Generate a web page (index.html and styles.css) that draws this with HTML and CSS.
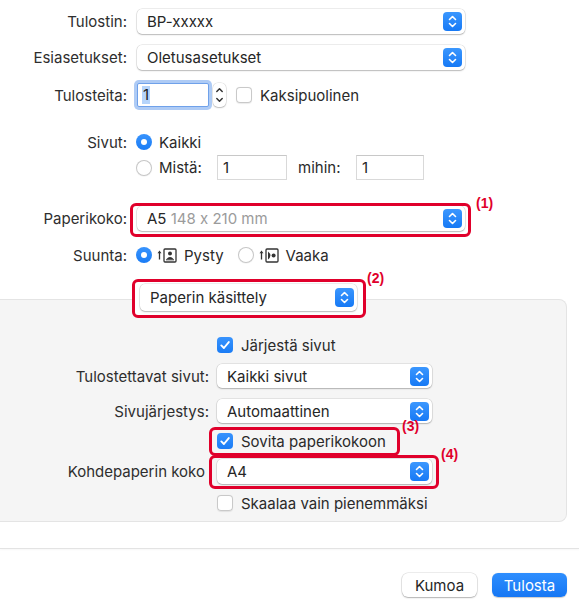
FILE: index.html
```html
<!DOCTYPE html>
<html lang="fi">
<head>
<meta charset="utf-8">
<title>Tulosta</title>
<link rel="stylesheet" href="styles.css">
</head>
<body>
<div class="dialog">
  <section class="top">
    <div class="row r1">
      <span class="lbl">Tulostin:</span>
      <div class="select w-main"><span class="val">BP-xxxxx</span><span class="arrows"><svg viewBox="0 0 19 19" width="19" height="19"><path d="M6.5 7.5L9.5 4.5L12.5 7.5M6.5 11.5L9.5 14.5L12.5 11.5" fill="none" stroke="#fff" stroke-width="1.6" stroke-linecap="round" stroke-linejoin="round"/></svg></span></div>
    </div>
    <div class="row r2">
      <span class="lbl">Esiasetukset:</span>
      <div class="select w-main"><span class="val">Oletusasetukset</span><span class="arrows"><svg viewBox="0 0 19 19" width="19" height="19"><path d="M6.5 7.5L9.5 4.5L12.5 7.5M6.5 11.5L9.5 14.5L12.5 11.5" fill="none" stroke="#fff" stroke-width="1.6" stroke-linecap="round" stroke-linejoin="round"/></svg></span></div>
    </div>
    <div class="row r3">
      <span class="lbl">Tulosteita:</span>
      <div class="num focus"><span class="sel-text">1</span></div>
      <span class="stepper"><svg viewBox="0 0 13 24" width="13" height="24"><path d="M3.8 8.5L6.5 5.8L9.2 8.5M3.8 15.5L6.5 18.2L9.2 15.5" fill="none" stroke="#333" stroke-width="1.5" stroke-linecap="round" stroke-linejoin="round"/></svg></span>
      <span class="check"></span>
      <span class="ctext">Kaksipuolinen</span>
    </div>
    <div class="row r4">
      <span class="lbl lbl-r">Sivut:</span>
      <span class="radio on"></span>
      <span class="rtext">Kaikki</span>
    </div>
    <div class="row r5">
      <span class="lbl lbl-r"></span>
      <span class="radio"></span>
      <span class="rtext from">Mistä:</span>
      <div class="field f1">1</div>
      <span class="to">mihin:</span>
      <div class="field f2">1</div>
    </div>
    <div class="row r6">
      <span class="lbl">Paperikoko:</span>
      <div class="hl hl1">
        <div class="select w-main"><span class="val">A5 <span class="dim">148 x 210 mm</span></span><span class="arrows"><svg viewBox="0 0 19 19" width="19" height="19"><path d="M6.5 7.5L9.5 4.5L12.5 7.5M6.5 11.5L9.5 14.5L12.5 11.5" fill="none" stroke="#fff" stroke-width="1.6" stroke-linecap="round" stroke-linejoin="round"/></svg></span></div>
        <span class="tag tag1">(1)</span>
      </div>
    </div>
    <div class="row r7">
      <span class="lbl lbl-r">Suunta:</span>
      <span class="radio on"></span>
      <svg class="orient" viewBox="0 0 21 15" width="21" height="15"><path d="M2.5 11.5V4" stroke="#333" stroke-width="1.3"/><path d="M0.5 5.2L2.5 2.4L4.5 5.2Z" fill="#333"/><rect x="7" y="1" width="12" height="13" rx="1" fill="#fff" stroke="#333" stroke-width="1.3"/><circle cx="13" cy="5.4" r="2" fill="#333"/><path d="M9.3 11.3Q13 6.8 16.7 11.3Z" fill="#333"/><path d="M9 11.8H17" stroke="#333" stroke-width="1"/></svg>
      <span class="otext">Pysty</span>
      <span class="radio r-vaaka"></span>
      <svg class="orient" viewBox="0 0 21 15" width="21" height="15"><path d="M2.5 11.5V4" stroke="#333" stroke-width="1.3"/><path d="M0.5 5.2L2.5 2.4L4.5 5.2Z" fill="#333"/><rect x="7" y="1" width="12" height="13" rx="1" fill="#fff" stroke="#333" stroke-width="1.3"/><path d="M9 3.5Q13.8 7.5 9 11.5Z" fill="#333"/><circle cx="14.6" cy="7.5" r="2" fill="#333"/></svg>
      <span class="otext">Vaaka</span>
    </div>
    <div class="row r8">
      <div class="hl hl2">
        <div class="select w-pane"><span class="val">Paperin käsittely</span><span class="arrows"><svg viewBox="0 0 19 19" width="19" height="19"><path d="M6.5 7.5L9.5 4.5L12.5 7.5M6.5 11.5L9.5 14.5L12.5 11.5" fill="none" stroke="#fff" stroke-width="1.6" stroke-linecap="round" stroke-linejoin="round"/></svg></span></div>
        <span class="tag tag2">(2)</span>
      </div>
    </div>
  </section>

  <section class="panel">
    <div class="prow p1">
      <span class="check on"><svg viewBox="0 0 16 16" width="16" height="16"><path d="M4.3 8.4L6.9 11L11.8 5.1" fill="none" stroke="#fff" stroke-width="1.9" stroke-linecap="round" stroke-linejoin="round"/></svg></span>
      <span class="ctext">Järjestä sivut</span>
    </div>
    <div class="prow p2">
      <span class="plbl">Tulostettavat sivut:</span>
      <div class="select w-sub"><span class="val">Kaikki sivut</span><span class="arrows"><svg viewBox="0 0 19 19" width="19" height="19"><path d="M6.5 7.5L9.5 4.5L12.5 7.5M6.5 11.5L9.5 14.5L12.5 11.5" fill="none" stroke="#fff" stroke-width="1.6" stroke-linecap="round" stroke-linejoin="round"/></svg></span></div>
    </div>
    <div class="prow p3">
      <span class="plbl">Sivujärjestys:</span>
      <div class="select w-sub"><span class="val">Automaattinen</span><span class="arrows"><svg viewBox="0 0 19 19" width="19" height="19"><path d="M6.5 7.5L9.5 4.5L12.5 7.5M6.5 11.5L9.5 14.5L12.5 11.5" fill="none" stroke="#fff" stroke-width="1.6" stroke-linecap="round" stroke-linejoin="round"/></svg></span></div>
    </div>
    <div class="prow p4">
      <div class="hl hl3">
        <span class="check on"><svg viewBox="0 0 16 16" width="16" height="16"><path d="M4.3 8.4L6.9 11L11.8 5.1" fill="none" stroke="#fff" stroke-width="1.9" stroke-linecap="round" stroke-linejoin="round"/></svg></span>
        <span class="ctext">Sovita paperikokoon</span>
        <span class="tag tag3">(3)</span>
      </div>
    </div>
    <div class="prow p5">
      <span class="plbl plbl-nc">Kohdepaperin koko</span>
      <div class="hl hl4">
        <div class="select w-sub"><span class="val">A4</span><span class="arrows"><svg viewBox="0 0 19 19" width="19" height="19"><path d="M6.5 7.5L9.5 4.5L12.5 7.5M6.5 11.5L9.5 14.5L12.5 11.5" fill="none" stroke="#fff" stroke-width="1.6" stroke-linecap="round" stroke-linejoin="round"/></svg></span></div>
        <span class="tag tag4">(4)</span>
      </div>
    </div>
    <div class="prow p6">
      <span class="check"></span>
      <span class="ctext">Skaalaa vain pienemmäksi</span>
    </div>
  </section>

  <div class="sep"></div>

  <div class="buttons">
    <button class="btn">Kumoa</button>
    <button class="btn primary">Tulosta</button>
  </div>
</div>
</body>
</html>
```

FILE: styles.css
```css
* { box-sizing: border-box; }

html, body {
  margin: 0;
  background: #ffffff;
}

body {
  width: 579px;
  height: 611px;
  overflow: hidden;
  font-family: Inter, "Noto Sans", sans-serif;
  font-size: 15px;
  font-feature-settings: "calt" 0;
  color: #2a2a2a;
}

.top {
  padding-top: 9px;
}

.row {
  display: flex;
  align-items: center;
}

.lbl {
  flex: none;
  width: 127px;
  margin-right: 10px;
  text-align: right;
  color: #2e2e2e;
  white-space: nowrap;
}

.lbl-r { margin-right: 9px; }

.r1 { height: 25px; }
.r2 { height: 25px; margin-top: 11px; }
.r3 { height: 24px; margin-top: 13px; }
.r4 { height: 16px; margin-top: 27px; }
.r5 { height: 25px; margin-top: 5px; }
.r6 { height: 25px; margin-top: 26px; }
.r7 { height: 16px; margin-top: 16px; }
.r8 {
  height: 27px;
  margin-top: 21px;
  padding-left: 140px;
  position: relative;
  z-index: 2;
}

/* popup buttons */
.select {
  display: flex;
  align-items: center;
  height: 25px;
  padding-left: 10px;
  background: #ffffff;
  border-radius: 5px;
  box-shadow: 0 0 0 0.5px rgba(0, 0, 0, 0.14), 0 1px 1.5px rgba(0, 0, 0, 0.22);
  color: #262626;
}

.select .val {
  flex: 1;
  white-space: nowrap;
}

.select .dim { color: #9b9b9b; }

.arrows {
  flex: none;
  display: flex;
  width: 19px;
  height: 19px;
  margin-right: 3px;
  border-radius: 4px;
  background: linear-gradient(#3b97fe, #1679f5);
}

.w-main { width: 328px; }
.w-pane { width: 217px; height: 27px; }
.w-sub { width: 215px; height: 24px; }

/* copies field */
.num {
  width: 72px;
  height: 24px;
  padding-left: 4px;
  display: flex;
  align-items: center;
  background: #fff;
  border: 1px solid #6fa1ea;
  border-radius: 2px;
  box-shadow: 0 0 0 3px rgba(108, 160, 236, 0.55);
}

.sel-text {
  background: #b5d4fb;
  padding: 0 1px;
  line-height: 18px;
  color: #1c1c1c;
}

.stepper {
  display: flex;
  width: 13px;
  height: 24px;
  margin-left: 4px;
  background: #fff;
  border-radius: 5px;
  box-shadow: 0 0 0 0.5px rgba(0, 0, 0, 0.14), 0 1px 1.5px rgba(0, 0, 0, 0.2);
}

/* checkboxes */
.check {
  flex: none;
  display: flex;
  width: 16px;
  height: 16px;
  border-radius: 4px;
  background: #fff;
  box-shadow: inset 0 0 0 1px #c9c9c9, 0 0.5px 1px rgba(0, 0, 0, 0.08);
}

.check.on {
  background: linear-gradient(#3893fd, #1a7cf5);
  box-shadow: none;
}

.r3 .check { margin-left: 10px; }

.ctext {
  margin-left: 8px;
  white-space: nowrap;
}

/* radios */
.radio {
  flex: none;
  position: relative;
  width: 16px;
  height: 16px;
  border-radius: 50%;
  background: #fff;
  box-shadow: inset 0 0 0 1px #c6c6c6, 0 0.5px 1px rgba(0, 0, 0, 0.08);
}

.radio.on {
  background: linear-gradient(#3893fd, #1a7cf5);
  box-shadow: none;
}

.radio.on::after {
  content: "";
  position: absolute;
  left: 5px;
  top: 5px;
  width: 6px;
  height: 6px;
  border-radius: 50%;
  background: #fff;
}

.rtext { margin-left: 7px; }

.from { width: 58px; }

.field {
  width: 70px;
  height: 25px;
  padding-left: 5px;
  display: flex;
  align-items: center;
  background: #fff;
  border: 1px solid #d9d9d9;
  border-top-color: #c8c8c8;
  color: #262626;
}

.f2 { width: 68px; }

.to {
  width: 58px;
  margin-left: 11px;
}

.orient {
  flex: none;
  margin-left: 5px;
}

.otext { margin-left: 6px; }

.r-vaaka { margin-left: 14px; }

/* highlight annotations */
.hl {
  position: relative;
  display: flex;
  align-items: center;
}

.hl::before {
  content: "";
  position: absolute;
  border: 3px solid #e0002b;
  border-radius: 6px;
}

.hl1::before { top: -3px; left: -7px; right: -6px; bottom: -6px; }
.hl2::before { top: -5px; left: -8px; right: -9px; bottom: -7px; background: #fff; z-index: -1; }
.hl3::before { top: -6px; left: -8px; right: -12px; bottom: -7px; }
.hl4::before { top: -4px; left: -8px; right: -7px; bottom: -5px; }

.hl3 { width: 171px; height: 16px; }

.tag {
  position: absolute;
  font-family: "Liberation Sans", Arial, sans-serif;
  font-weight: bold;
  font-size: 14px;
  color: #e0002b;
  line-height: 14px;
  white-space: nowrap;
}

.tag1 { left: calc(100% + 11px); top: -10px; }
.tag2 { left: calc(100% + 10px); top: -13px; }
.tag3 { left: calc(100% + 14px); top: -14px; }
.tag4 { left: calc(100% + 9px); top: -12px; }

/* settings pane */
.panel {
  position: relative;
  z-index: 1;
  width: 567px;
  margin-top: -12px;
  padding-top: 37px;
  padding-bottom: 10px;
  background: #f5f5f5;
  border: 1px solid #e4e4e4;
  border-left: none;
  border-radius: 0 8px 8px 0;
}

.prow {
  display: flex;
  align-items: center;
}

.p1 { height: 16px; padding-left: 217px; }
.p2 { height: 24px; margin-top: 11px; }
.p3 { height: 24px; margin-top: 11px; }
.p4 { height: 16px; margin-top: 10px; padding-left: 217px; }
.p5 { height: 25px; margin-top: 10px; }
.p6 { height: 16px; margin-top: 11px; padding-left: 217px; }

.p5 .w-sub { height: 25px; }

.plbl {
  flex: none;
  width: 209px;
  margin-right: 8px;
  text-align: right;
  color: #2e2e2e;
  white-space: nowrap;
}

.plbl-nc { padding-right: 4px; }

/* footer */
.sep {
  height: 1px;
  margin-top: 26px;
  background: #e3e3e3;
  box-shadow: 0 1px 2px rgba(0, 0, 0, 0.05);
}

.buttons {
  display: flex;
  justify-content: flex-end;
  gap: 15px;
  margin-top: 24px;
  padding-right: 12px;
}

.btn {
  width: 75px;
  height: 24px;
  padding: 0;
  border: none;
  border-radius: 6px;
  font-family: Inter, "Noto Sans", sans-serif;
  font-size: 15px;
  color: #262626;
  background: #fff;
  box-shadow: 0 0 0 0.5px rgba(0, 0, 0, 0.14), 0 1px 1.5px rgba(0, 0, 0, 0.25);
}

.btn.primary {
  color: #fff;
  background: linear-gradient(#2e8efe, #1677f4);
  box-shadow: 0 0.5px 1px rgba(0, 0, 0, 0.2);
}
```
